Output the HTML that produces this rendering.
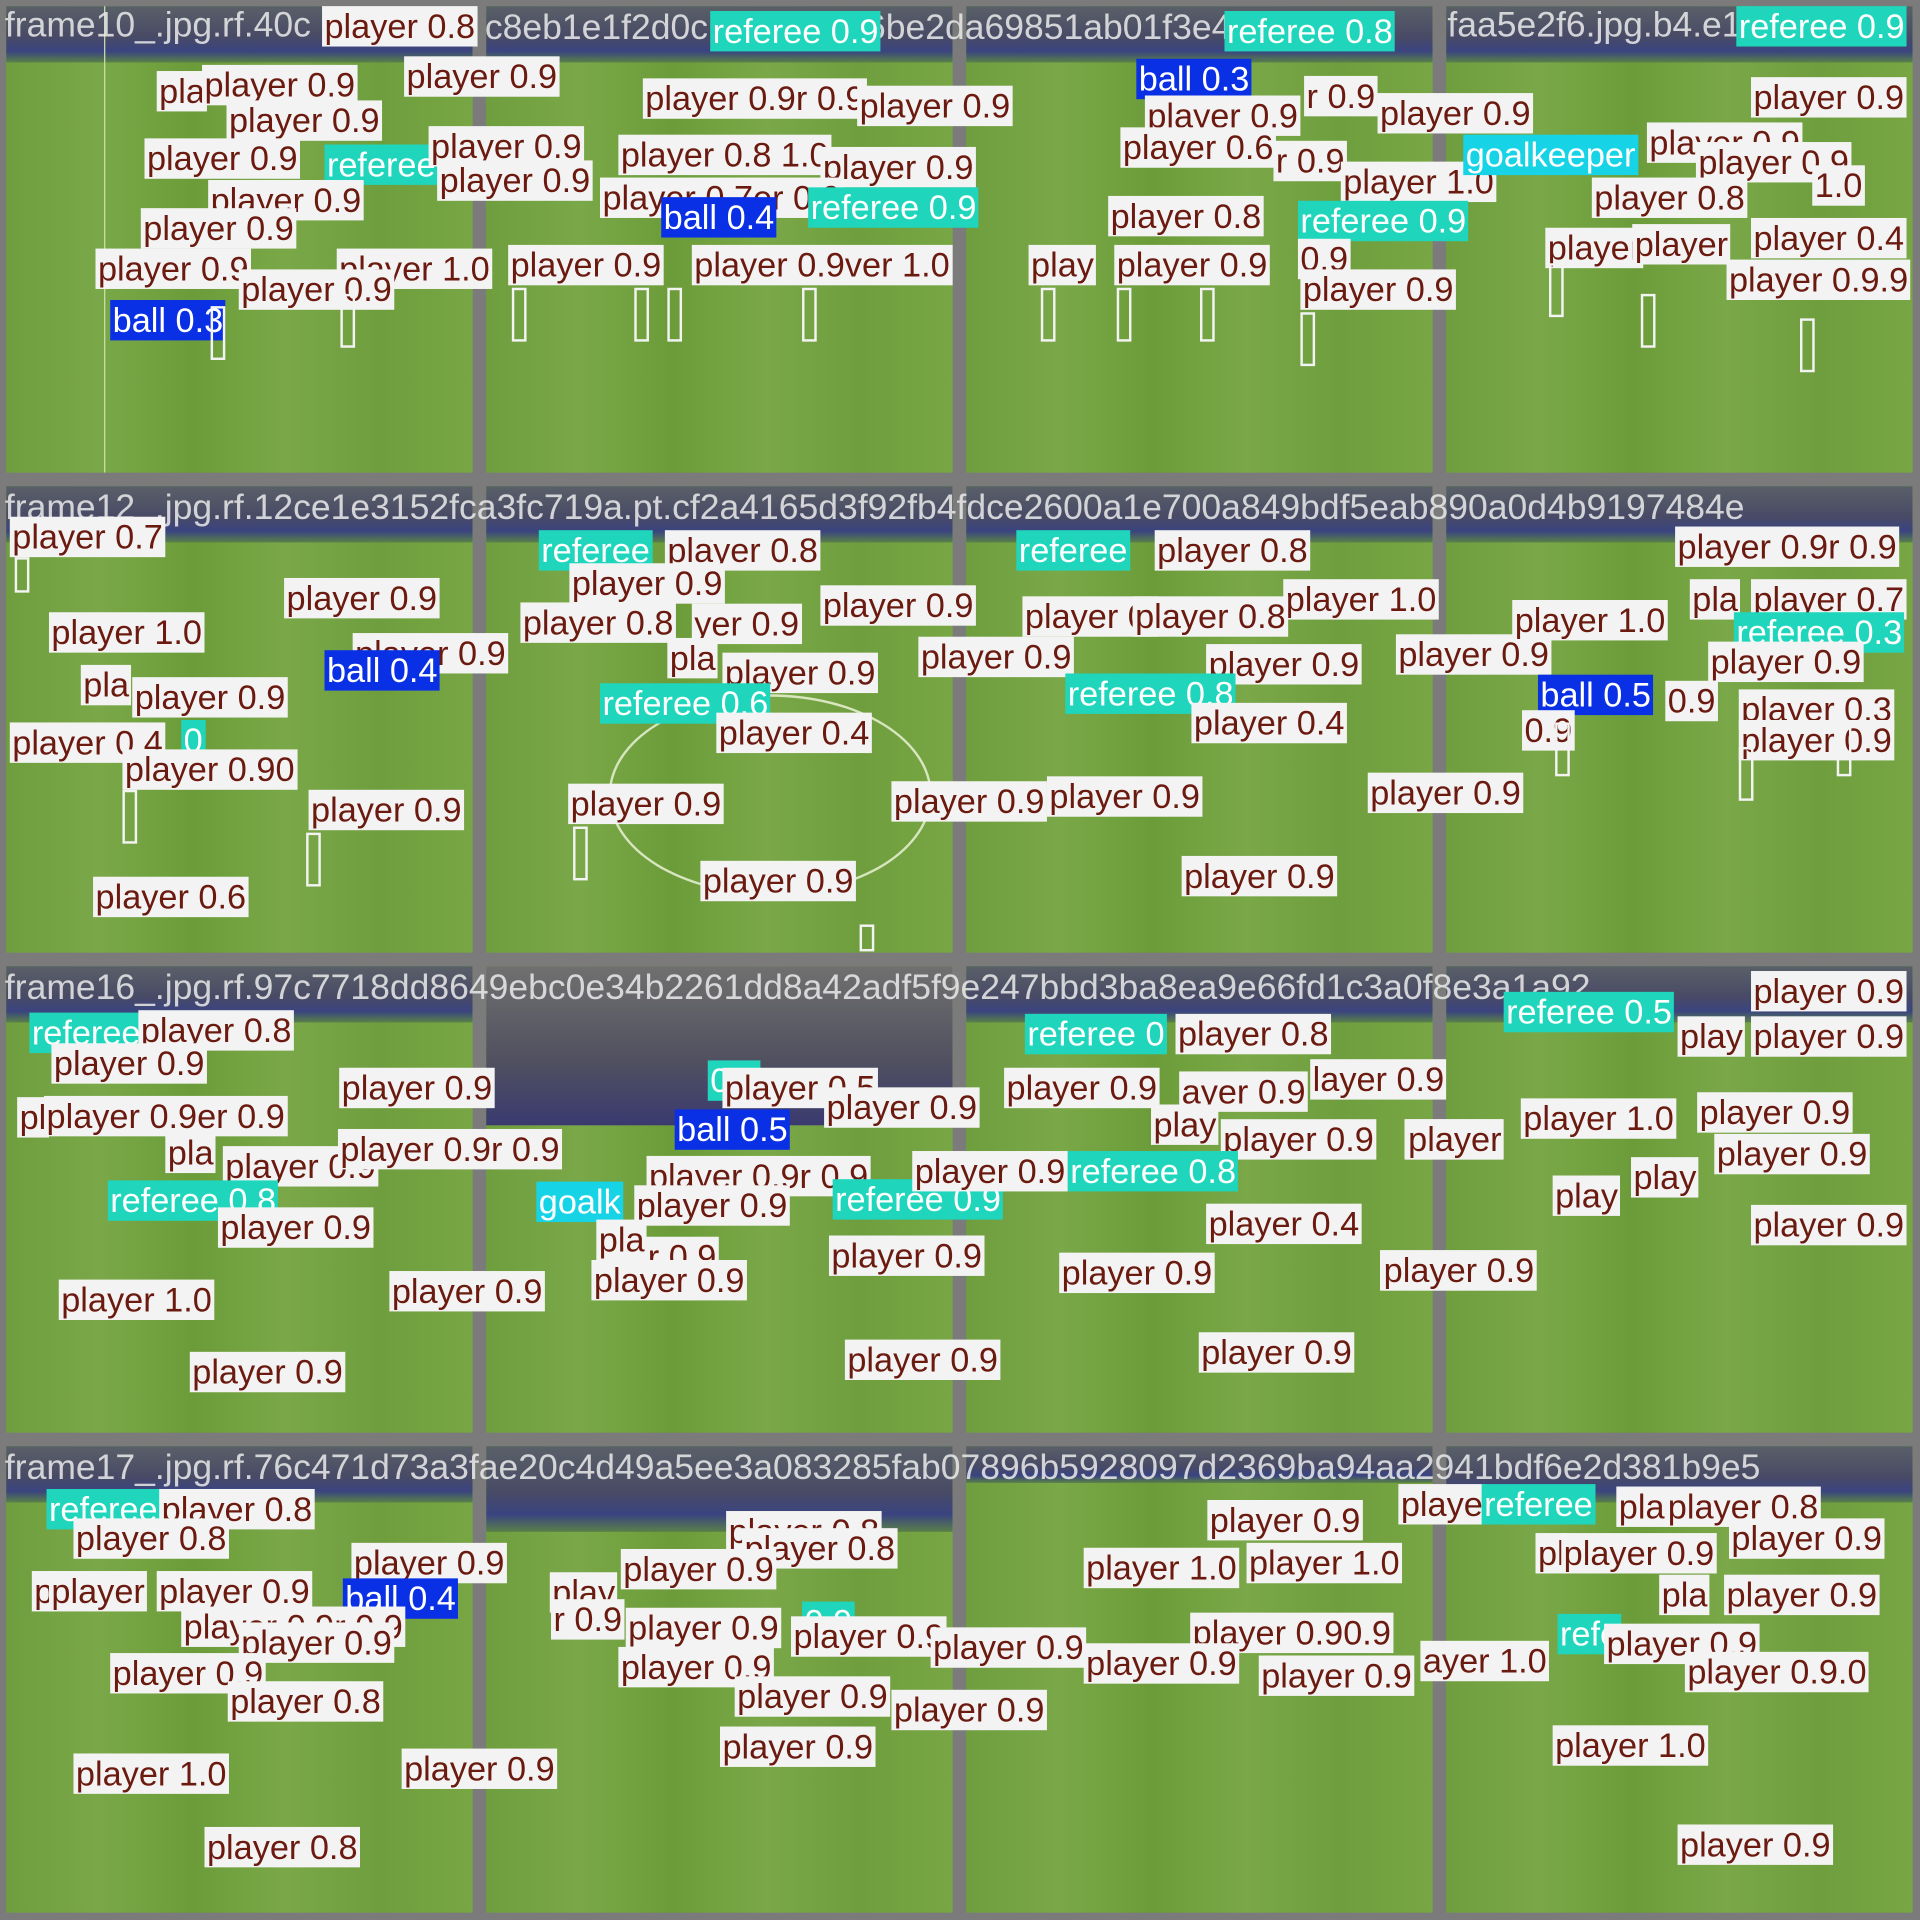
<!DOCTYPE html>
<html><head><meta charset="utf-8"><style>
html,body{margin:0;padding:0;width:1920px;height:1920px;overflow:hidden;background:#7b7b7b}
#c{position:absolute;left:0;top:0;width:1568px;height:1568px;transform:scale(1.22449);transform-origin:0 0;font-family:"Liberation Sans",sans-serif}
.t{position:absolute;width:381px;height:381px;overflow:hidden;background:linear-gradient(90deg,#6f9e3e 0%,#7aa848 20%,#6c9c3a 40%,#7aa848 60%,#6f9e3e 80%,#78a644 100%)}
.h{position:absolute;left:0;top:0;width:100%;height:46px;background:linear-gradient(180deg,#5a6068 0%,#484a66 55%,#3a4480 80%,#5a8048 100%)}
.n{position:absolute;color:rgba(235,235,235,.85);font-size:29px;line-height:30px;white-space:nowrap}
.l{position:absolute;height:33px;line-height:34px;font-size:28px;padding:0 2px;background:#f3f3f3;color:#6b1a10;white-space:nowrap}
.r{background:#1fd6bc;color:#fff}
.g{background:#17d3e6;color:#fff}
.b{background:#0a30e6;color:#fff}
.bx{position:absolute;width:8px;height:40px;border:2px solid #f3f3f3}
</style></head><body><div id="c">
<div class="t" style="left:5px;top:5px"><div class="h"></div><div style="position:absolute;left:80px;top:0;width:1px;height:381px;background:#cde0b0"></div></div>
<div class="t" style="left:397px;top:5px"><div class="h"></div></div>
<div class="t" style="left:789px;top:5px"><div class="h"></div></div>
<div class="t" style="left:1181px;top:5px"><div class="h"></div></div>
<div class="t" style="left:5px;top:397px"><div class="h"></div></div>
<div class="t" style="left:397px;top:397px"><div class="h"></div><div style="position:absolute;left:100px;top:170px;width:260px;height:160px;border:2px solid #d8e6c0;border-radius:50%"></div></div>
<div class="t" style="left:789px;top:397px"><div class="h"></div></div>
<div class="t" style="left:1181px;top:397px"><div class="h"></div></div>
<div class="t" style="left:5px;top:789px"><div class="h"></div></div>
<div class="t" style="left:397px;top:789px"><div class="h" style="height:130px;background:linear-gradient(180deg,#707070,#505060 60%,#3a3a70)"></div></div>
<div class="t" style="left:789px;top:789px"><div class="h"></div></div>
<div class="t" style="left:1181px;top:789px"><div class="h"></div></div>
<div class="t" style="left:5px;top:1181px"><div class="h"></div></div>
<div class="t" style="left:397px;top:1181px"><div class="h" style="height:70px"></div></div>
<div class="t" style="left:789px;top:1181px"><div class="h" style="height:30px"></div></div>
<div class="t" style="left:1181px;top:1181px"><div class="h"></div></div>

<div class="n" style="left:4px;top:6px">frame10_.jpg.rf.40c</div>
<div class="n" style="left:396px;top:8px">c8eb1e1f2d0c 44f2922a6be2da69851ab01f3e4f9b</div>
<div class="n" style="left:1182px;top:6px">faa5e2f6.jpg.b4.e1</div>
<div class="n" style="left:4px;top:400px">frame12_.jpg.rf.12ce1e3152fca3fc719a.pt.cf2a4165d3f92fb4fdce2600a1e700a849bdf5eab890a0d4b9197484e</div>
<div class="n" style="left:4px;top:792px">frame16_.jpg.rf.97c7718dd8649ebc0e34b2261dd8a42adf5f9e247bbd3ba8ea9e66fd1c3a0f8e3a1a92</div>
<div class="n" style="left:4px;top:1184px">frame17_.jpg.rf.76c471d73a3fae20c4d49a5ee3a083285fab07896b5928097d2369ba94aa2941bdf6e2d381b9e5</div>

<div class="l" style="left:263px;top:5px">player 0.8</div>
<div class="l" style="left:330px;top:46px">player 0.9</div>
<div class="l" style="left:128px;top:58px">pla</div>
<div class="l" style="left:165px;top:53px">player 0.9</div>
<div class="l" style="left:185px;top:82px">player 0.9</div>
<div class="l" style="left:118px;top:113px">player 0.9</div>
<div class="l r" style="left:265px;top:118px">referee 0.8</div>
<div class="l" style="left:170px;top:147px">player 0.9</div>
<div class="l" style="left:115px;top:170px">player 0.9</div>
<div class="l" style="left:78px;top:203px">player 0.9</div>
<div class="l" style="left:275px;top:203px">player 1.0</div>
<div class="l" style="left:195px;top:220px">player 0.9</div>
<div class="l b" style="left:90px;top:245px">ball 0.3</div>
<div class="bx" style="left:172px;top:250px"></div><div class="bx" style="left:278px;top:240px"></div>
<div class="l r" style="left:580px;top:9px">referee 0.9</div>
<div class="l" style="left:350px;top:103px">player 0.9</div>
<div class="l" style="left:357px;top:131px">player 0.9</div>
<div class="l" style="left:525px;top:64px">player 0.9r 0.9</div>
<div class="l" style="left:700px;top:70px">player 0.9</div>
<div class="l" style="left:505px;top:110px">player 0.8 1.0</div>
<div class="l" style="left:670px;top:120px">player 0.9</div>
<div class="l" style="left:490px;top:145px">player 0.7er 0.9</div>
<div class="l b" style="left:540px;top:161px">ball 0.4</div>
<div class="l r" style="left:660px;top:153px">referee 0.9</div>
<div class="l" style="left:415px;top:200px">player 0.9</div>
<div class="l" style="left:565px;top:200px">player 0.9ver 1.0</div>
<div class="bx" style="left:418px;top:235px"></div><div class="bx" style="left:518px;top:235px"></div><div class="bx" style="left:545px;top:235px"></div><div class="bx" style="left:655px;top:235px"></div>
<div class="l r" style="left:1000px;top:9px">referee 0.8</div>
<div class="l b" style="left:928px;top:48px">ball 0.3</div>
<div class="l" style="left:1065px;top:62px">r 0.9</div>
<div class="l" style="left:935px;top:78px">player 0.9</div>
<div class="l" style="left:1125px;top:76px">player 0.9</div>
<div class="l" style="left:915px;top:104px">player 0.6</div>
<div class="l" style="left:1040px;top:115px">r 0.9</div>
<div class="l" style="left:1095px;top:132px">player 1.0</div>
<div class="l" style="left:905px;top:160px">player 0.8</div>
<div class="l r" style="left:1060px;top:164px">referee 0.9</div>
<div class="l" style="left:840px;top:200px">play</div>
<div class="l" style="left:910px;top:200px">player 0.9</div>
<div class="l" style="left:1060px;top:195px">0.9</div>
<div class="l" style="left:1062px;top:220px">player 0.9</div>
<div class="bx" style="left:850px;top:235px"></div><div class="bx" style="left:912px;top:235px"></div><div class="bx" style="left:980px;top:235px"></div><div class="bx" style="left:1062px;top:255px"></div>
<div class="l r" style="left:1418px;top:5px">referee 0.9</div>
<div class="l" style="left:1430px;top:63px">player 0.9</div>
<div class="l" style="left:1345px;top:100px">player 0.9</div>
<div class="l g" style="left:1195px;top:110px">goalkeeper</div>
<div class="l" style="left:1385px;top:116px">player 0.9</div>
<div class="l" style="left:1480px;top:135px">1.0</div>
<div class="l" style="left:1300px;top:145px">player 0.8</div>
<div class="l" style="left:1262px;top:186px">player</div>
<div class="l" style="left:1333px;top:183px">player</div>
<div class="l" style="left:1430px;top:178px">player 0.4</div>
<div class="l" style="left:1410px;top:212px">player 0.9.9</div>
<div class="bx" style="left:1265px;top:215px"></div><div class="bx" style="left:1340px;top:240px"></div><div class="bx" style="left:1470px;top:260px"></div>
<div class="l" style="left:8px;top:422px">player 0.7</div>
<div class="l" style="left:232px;top:472px">player 0.9</div>
<div class="l" style="left:40px;top:500px">player 1.0</div>
<div class="l" style="left:288px;top:517px">player 0.9</div>
<div class="l b" style="left:265px;top:531px">ball 0.4</div>
<div class="l" style="left:66px;top:543px">pla</div>
<div class="l" style="left:108px;top:553px">player 0.9</div>
<div class="l" style="left:8px;top:590px">player 0.4</div>
<div class="l r" style="left:148px;top:588px">0</div>
<div class="l" style="left:100px;top:612px">player 0.90</div>
<div class="l" style="left:252px;top:645px">player 0.9</div>
<div class="l" style="left:76px;top:716px">player 0.6</div>
<div class="bx" style="left:12px;top:455px;height:25px"></div><div class="bx" style="left:100px;top:645px"></div><div class="bx" style="left:250px;top:680px"></div>
<div class="l r" style="left:440px;top:433px">referee</div>
<div class="l" style="left:543px;top:433px">player 0.8</div>
<div class="l" style="left:465px;top:460px">player 0.9</div>
<div class="l" style="left:425px;top:492px">player 0.8</div>
<div class="l" style="left:565px;top:493px">yer 0.9</div>
<div class="l" style="left:670px;top:478px">player 0.9</div>
<div class="l" style="left:545px;top:521px">pla</div>
<div class="l" style="left:590px;top:533px">player 0.9</div>
<div class="l r" style="left:490px;top:558px">referee 0.6</div>
<div class="l" style="left:585px;top:582px">player 0.4</div>
<div class="l" style="left:464px;top:640px">player 0.9</div>
<div class="l" style="left:572px;top:703px">player 0.9</div>
<div class="bx" style="left:468px;top:675px"></div><div class="bx" style="left:702px;top:755px;height:18px"></div>
<div class="l r" style="left:830px;top:433px">referee</div>
<div class="l" style="left:943px;top:433px">player 0.8</div>
<div class="l" style="left:1048px;top:473px">player 1.0</div>
<div class="l" style="left:835px;top:487px">player 0.</div>
<div class="l" style="left:925px;top:487px">player 0.8</div>
<div class="l" style="left:750px;top:520px">player 0.9</div>
<div class="l" style="left:985px;top:526px">player 0.9</div>
<div class="l" style="left:1140px;top:518px">player 0.9</div>
<div class="l r" style="left:870px;top:550px">referee 0.8</div>
<div class="l" style="left:973px;top:574px">player 0.4</div>
<div class="l" style="left:728px;top:638px">player 0.9</div>
<div class="l" style="left:855px;top:634px">player 0.9</div>
<div class="l" style="left:1117px;top:631px">player 0.9</div>
<div class="l" style="left:965px;top:699px">player 0.9</div>
<div class="l" style="left:1368px;top:430px">player 0.9r 0.9</div>
<div class="l" style="left:1380px;top:473px">pla</div>
<div class="l" style="left:1430px;top:473px">player 0.7</div>
<div class="l" style="left:1235px;top:490px">player 1.0</div>
<div class="l r" style="left:1416px;top:500px">referee 0.3</div>
<div class="l" style="left:1395px;top:524px">player 0.9</div>
<div class="l b" style="left:1256px;top:551px">ball 0.5</div>
<div class="l" style="left:1360px;top:556px">0.9</div>
<div class="l" style="left:1420px;top:563px">player 0.3</div>
<div class="l" style="left:1420px;top:588px">player 0.9</div>
<div class="l" style="left:1243px;top:580px">0.9</div>
<div class="bx" style="left:1270px;top:590px"></div><div class="bx" style="left:1420px;top:610px"></div><div class="bx" style="left:1500px;top:590px"></div>
<div class="l r" style="left:24px;top:827px">referee</div>
<div class="l" style="left:113px;top:825px">player 0.8</div>
<div class="l" style="left:42px;top:852px">player 0.9</div>
<div class="l" style="left:277px;top:872px">player 0.9</div>
<div class="l" style="left:14px;top:896px">pl</div>
<div class="l" style="left:36px;top:895px">player 0.9er 0.9</div>
<div class="l" style="left:135px;top:925px">pla</div>
<div class="l" style="left:182px;top:936px">player 0.9</div>
<div class="l" style="left:276px;top:922px">player 0.9r 0.9</div>
<div class="l r" style="left:88px;top:964px">referee 0.8</div>
<div class="l" style="left:178px;top:986px">player 0.9</div>
<div class="l" style="left:48px;top:1045px">player 1.0</div>
<div class="l" style="left:318px;top:1038px">player 0.9</div>
<div class="l" style="left:155px;top:1104px">player 0.9</div>
<div class="l r" style="left:578px;top:866px">0.5</div>
<div class="l" style="left:590px;top:872px">player 0.5</div>
<div class="l" style="left:673px;top:888px">player 0.9</div>
<div class="l b" style="left:551px;top:906px">ball 0.5</div>
<div class="l" style="left:528px;top:944px">player 0.9r 0.9</div>
<div class="l g" style="left:438px;top:965px">goalk</div>
<div class="l" style="left:518px;top:968px">player 0.9</div>
<div class="l r" style="left:680px;top:963px">referee 0.9</div>
<div class="l" style="left:487px;top:996px">pla</div>
<div class="l" style="left:527px;top:1010px">r 0.9</div>
<div class="l" style="left:677px;top:1009px">player 0.9</div>
<div class="l" style="left:483px;top:1029px">player 0.9</div>
<div class="l" style="left:690px;top:1094px">player 0.9</div>
<div class="l r" style="left:837px;top:828px">referee 0</div>
<div class="l" style="left:960px;top:828px">player 0.8</div>
<div class="l" style="left:820px;top:872px">player 0.9</div>
<div class="l" style="left:963px;top:875px">ayer 0.9</div>
<div class="l" style="left:1070px;top:865px">layer 0.9</div>
<div class="l" style="left:940px;top:902px">play</div>
<div class="l" style="left:997px;top:914px">player 0.9</div>
<div class="l" style="left:1147px;top:914px">player</div>
<div class="l" style="left:745px;top:940px">player 0.9</div>
<div class="l r" style="left:872px;top:940px">referee 0.8</div>
<div class="l" style="left:985px;top:983px">player 0.4</div>
<div class="l" style="left:865px;top:1023px">player 0.9</div>
<div class="l" style="left:1127px;top:1021px">player 0.9</div>
<div class="l" style="left:979px;top:1088px">player 0.9</div>
<div class="l" style="left:1430px;top:793px">player 0.9</div>
<div class="l r" style="left:1228px;top:810px">referee 0.5</div>
<div class="l" style="left:1370px;top:830px">play</div>
<div class="l" style="left:1430px;top:830px">player 0.9</div>
<div class="l" style="left:1242px;top:897px">player 1.0</div>
<div class="l" style="left:1386px;top:892px">player 0.9</div>
<div class="l" style="left:1148px;top:914px">player</div>
<div class="l" style="left:1400px;top:926px">player 0.9</div>
<div class="l" style="left:1268px;top:960px">play</div>
<div class="l" style="left:1332px;top:945px">play</div>
<div class="l" style="left:1430px;top:984px">player 0.9</div>
<div class="l" style="left:1128px;top:1021px">player 0.9</div>
<div class="l r" style="left:38px;top:1216px">referee</div>
<div class="l" style="left:130px;top:1216px">player 0.8</div>
<div class="l" style="left:60px;top:1240px">player 0.8</div>
<div class="l" style="left:287px;top:1260px">player 0.9</div>
<div class="l" style="left:26px;top:1283px">p</div>
<div class="l" style="left:40px;top:1283px">player</div>
<div class="l" style="left:128px;top:1283px">player 0.9</div>
<div class="l b" style="left:280px;top:1289px">ball 0.4</div>
<div class="l" style="left:148px;top:1312px">player 0.9r 0.9</div>
<div class="l" style="left:195px;top:1325px">player 0.9</div>
<div class="l" style="left:90px;top:1350px">player 0.9</div>
<div class="l" style="left:186px;top:1373px">player 0.8</div>
<div class="l" style="left:60px;top:1432px">player 1.0</div>
<div class="l" style="left:328px;top:1428px">player 0.9</div>
<div class="l" style="left:167px;top:1492px">player 0.8</div>
<div class="l" style="left:593px;top:1234px">player 0.8</div>
<div class="l" style="left:606px;top:1248px">player 0.8</div>
<div class="l" style="left:507px;top:1265px">player 0.9</div>
<div class="l" style="left:449px;top:1284px">play</div>
<div class="l r" style="left:655px;top:1308px">0.9</div>
<div class="l" style="left:450px;top:1306px">r 0.9</div>
<div class="l" style="left:511px;top:1313px">player 0.9</div>
<div class="l" style="left:646px;top:1320px">player 0.9</div>
<div class="l" style="left:505px;top:1345px">player 0.9</div>
<div class="l" style="left:600px;top:1369px">player 0.9</div>
<div class="l" style="left:588px;top:1410px">player 0.9</div>
<div class="l" style="left:986px;top:1225px">player 0.9</div>
<div class="l" style="left:885px;top:1264px">player 1.0</div>
<div class="l" style="left:1018px;top:1260px">player 1.0</div>
<div class="l" style="left:760px;top:1329px">player 0.9</div>
<div class="l" style="left:972px;top:1317px">player 0.90.9</div>
<div class="l" style="left:885px;top:1342px">player 0.9</div>
<div class="l" style="left:1028px;top:1352px">player 0.9</div>
<div class="l" style="left:728px;top:1380px">player 0.9</div>
<div class="l" style="left:1142px;top:1212px">playe</div>
<div class="l r" style="left:1210px;top:1212px">referee</div>
<div class="l" style="left:1320px;top:1214px">pla</div>
<div class="l" style="left:1360px;top:1214px">player 0.8</div>
<div class="l" style="left:1254px;top:1252px">pl</div>
<div class="l" style="left:1275px;top:1252px">player 0.9</div>
<div class="l" style="left:1412px;top:1240px">player 0.9</div>
<div class="l" style="left:1355px;top:1286px">pla</div>
<div class="l" style="left:1408px;top:1286px">player 0.9</div>
<div class="l r" style="left:1272px;top:1318px">refe</div>
<div class="l" style="left:1310px;top:1326px">player 0.9</div>
<div class="l" style="left:1160px;top:1340px">ayer 1.0</div>
<div class="l" style="left:1376px;top:1349px">player 0.9.0</div>
<div class="l" style="left:1268px;top:1409px">player 1.0</div>
<div class="l" style="left:1370px;top:1490px">player 0.9</div>
</div></body></html>
